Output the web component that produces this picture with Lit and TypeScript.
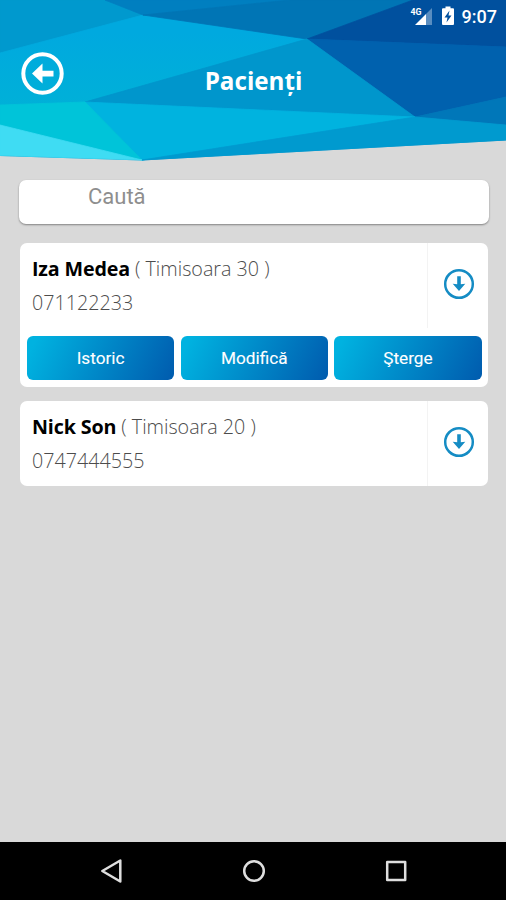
import { LitElement, html, css, svg } from "lit";
import { customElement, property } from "lit/decorators.js";

interface Patient {
  name: string;
  city: string;
  age: number;
  phone: string;
  open: boolean;
}

const patients: Patient[] = [
  { name: "Iza Medea", city: "Timisoara", age: 30, phone: "071122233", open: true },
  { name: "Nick Son", city: "Timisoara", age: 20, phone: "0747444555", open: false },
];

const actions = ["Istoric", "Modifică", "Şterge"];

const facets: [string, string][] = [
  ["0,0 506,0 506,140 142,160 0,155.5", "#0092cb"],
  ["0,0 105,0 143,15 0,53", "#0099ce"],
  ["0,53 143,15 307,39 85,102 0,105", "url(#sky)"],
  ["105,0 290,0 143,15", "#007fc0"],
  ["143,15 290,0 413,0 307,39", "#0075b5"],
  ["413,0 506,0 506,47 307,39", "#00509e"],
  ["307,39 506,47 506,97 415,117", "#0061ae"],
  ["415,117 506,97 506,125", "#0077b9"],
  ["307,39 415,117 85,102", "#0096cc"],
  ["85,102 415,117 142,160", "#00b3df"],
  ["415,117 506,125 506,140 142,160", "#009acf"],
  ["0,105 85,102 142,160 0,125", "#00c4d9"],
  ["0,125 142,160 0,155.5", "#3fdcf3"],
];

@customElement("patient-card")
export class PatientCard extends LitElement {
  @property({ attribute: false }) patient!: Patient;

  static styles = css`
    :host { display: block; background: #fff; border-radius: 7px; overflow: hidden; }
    .row { display: flex; height: 85px; }
    .info { flex: 1; padding: 9px 0 0 12px; box-sizing: border-box; white-space: nowrap; }
    .line { height: 34px; font: 300 19.7px/34px "Open Sans", sans-serif; color: #4c4c4c; }
    .name { font-weight: 700; color: #000; letter-spacing: -0.15px; }
    .toggle { width: 61px; box-sizing: border-box; border-left: 1px solid #f3f3f3; display: flex; align-items: center; justify-content: center; padding: 0 0 3px 1px; }
    .actions { display: flex; gap: 6.5px; padding: 8px 6.5px 7px 7px; }
    .btn { flex: 1; height: 44px; border-radius: 6px; color: #fff; text-align: center; font: 400 17.2px/44px Roboto, sans-serif; -webkit-text-stroke: 0.1px #fff; background: linear-gradient(115deg, #00b2e0 6%, #005bae 100%); }
  `;

  render() {
    const p = this.patient;
    return html`
      <div class="row">
        <div class="info">
          <div class="line"><span class="name">${p.name}</span> ( ${p.city} ${p.age} )</div>
          <div class="line">${p.phone}</div>
        </div>
        <div class="toggle">
          <svg width="32" height="32" viewBox="0 0 32 32">
            <circle cx="16" cy="16" r="13.8" fill="none" stroke="#158cc4" stroke-width="2.5" />
            <path d="M14.2 8.3H17.8V16.2L22.3 15.8L16 23L9.7 15.8L14.2 16.2Z" fill="#158cc4" />
          </svg>
        </div>
      </div>
      ${p.open ? html`<div class="actions">${actions.map((a) => html`<div class="btn">${a}</div>`)}</div>` : null}
    `;
  }
}

@customElement("app-root")
export class AppRoot extends LitElement {
  static styles = css`
    :host { display: flex; flex-direction: column; width: 506px; height: 900px; background: #d9d9d9; overflow: hidden; }
    .header { position: relative; height: 162px; flex: none; color: #fff; }
    .facets { position: absolute; inset: 0; }
    .status { position: relative; display: flex; height: 33px; align-items: center; justify-content: flex-end; padding-right: 9px; box-sizing: border-box; }
    .time { font: 500 18px/33px Roboto, sans-serif; margin-left: 8px; }
    .cell { font: 700 9px Roboto, sans-serif; }
    .bar { position: relative; display: grid; grid-template-columns: 44px 1fr 44px; height: 82px; align-items: center; padding: 0 21px; }
    .title { font: 700 24.2px/32px "Open Sans", sans-serif; text-align: center; padding: 14px 0 0 1px; }
    .content { flex: 1; display: flex; flex-direction: column; padding: 18px 18px 0 20px; }
    .search { height: 43.5px; margin: 0 -1px 19.5px -1px; border-radius: 7px; background: #fff; box-shadow: 0 1px 2px rgba(0, 0, 0, 0.4); box-sizing: border-box; padding-left: 69px; font: 400 22px/33px Roboto, sans-serif; color: #8e8e8e; }
    .list { display: flex; flex-direction: column; gap: 14px; }
    .nav { flex: none; height: 58px; background: #000; }
    .nav svg { display: block; }
  `;

  render() {
    return html`
      <div class="header">
        <svg class="facets" width="506" height="162" viewBox="0 0 506 162">
          <defs>
            <linearGradient id="sky" x1="0" y1="0" x2="0" y2="1">
              <stop offset="0.2" stop-color="#00a9df" />
              <stop offset="1" stop-color="#00b0d8" />
            </linearGradient>
          </defs>
          ${facets.map(([pts, fill]) => svg`<polygon points=${pts} fill=${fill} stroke=${fill} stroke-width="0.8" />`)}
        </svg>
        <div class="status">
          <svg width="46" height="33" viewBox="0 0 46 33">
            <path d="M24 8V25H18V14Z" fill="#fff" fill-opacity="0.35" />
            <path d="M18 14V25H7Z" fill="#fff" />
            <text class="cell" x="2.5" y="15.2" fill="#fff" textLength="11" lengthAdjust="spacingAndGlyphs">4G</text>
            <path d="M37.5 6.5H42.5V8.3H45Q46 8.3 46 9.3V24Q46 25 45 25H35Q34 25 34 24V9.3Q34 8.3 35 8.3H37.5Z" fill="#fff" />
            <path d="M41.5 10.5L36.5 17.5H39.5L38.5 22.5L43.5 15.5H40.5Z" fill="#00509e" />
          </svg>
          <span class="time">9:07</span>
        </div>
        <div class="bar">
          <svg width="44" height="44" viewBox="0 0 44 44">
            <circle cx="21.5" cy="21.5" r="19.2" fill="none" stroke="#fff" stroke-width="4" />
            <path d="M11 21.5L21.5 11.5V18.7H32.5V24.5H21.5V31.5Z" fill="#fff" />
          </svg>
          <div class="title">Pacienți</div>
        </div>
      </div>
      <div class="content">
        <div class="search">Caută</div>
        <div class="list">${patients.map((p) => html`<patient-card .patient=${p}></patient-card>`)}</div>
      </div>
      <div class="nav">
        <svg width="506" height="58" viewBox="0 0 506 58" fill="none" stroke="#dedede" stroke-width="2.5" stroke-linejoin="round">
          <path d="M102.3 29L120.3 18.5V39.5Z" />
          <circle cx="254" cy="29" r="9.8" />
          <rect x="387.2" y="20" width="18" height="18" />
        </svg>
      </div>
    `;
  }
}
